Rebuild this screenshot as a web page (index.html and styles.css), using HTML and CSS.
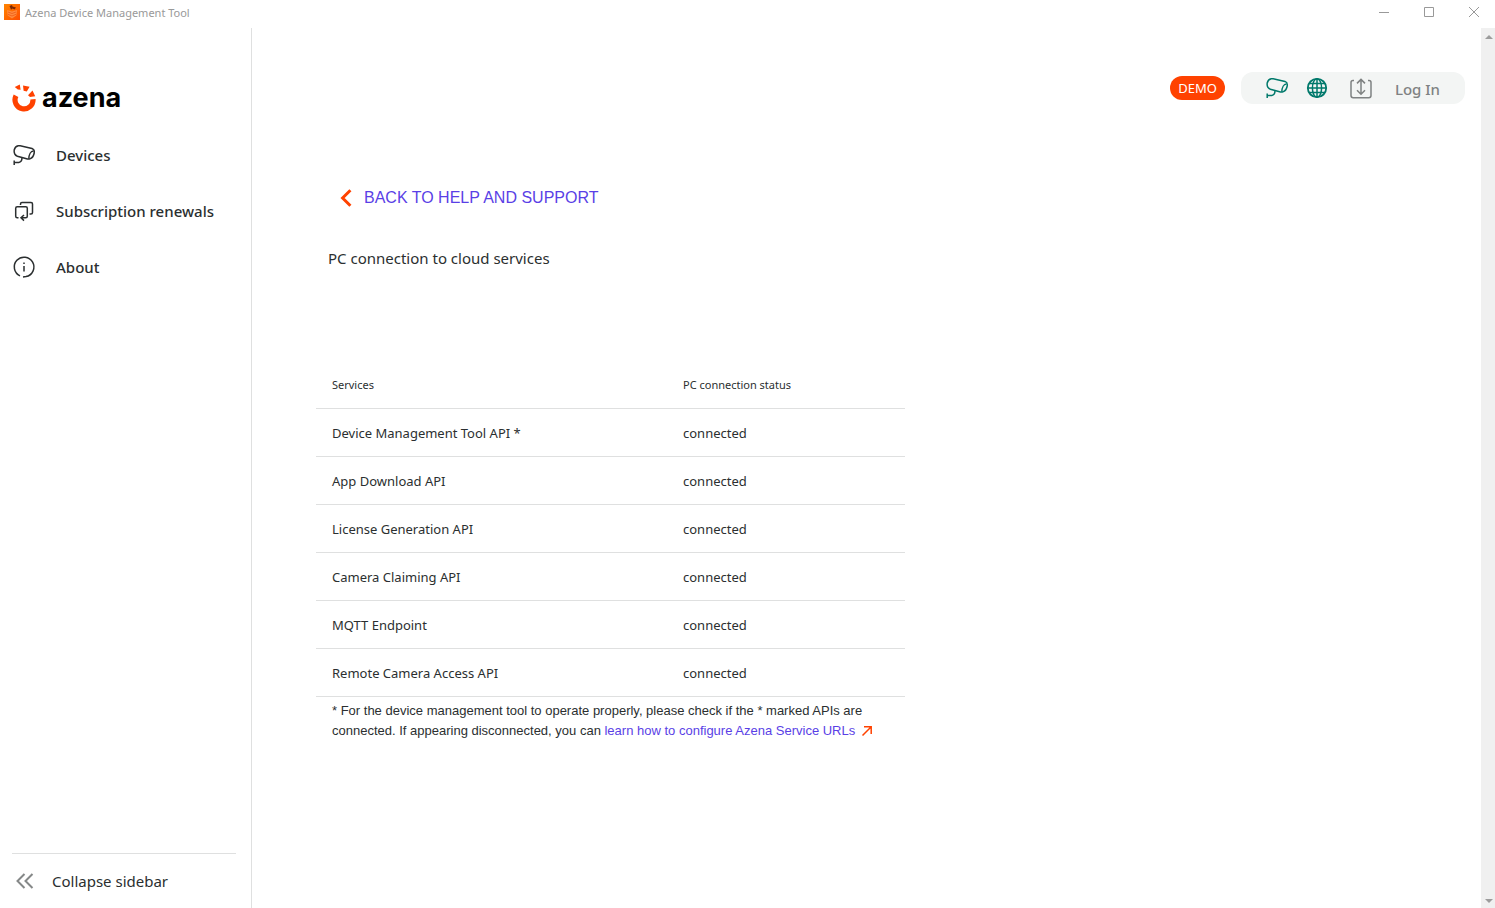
FILE: index.html
```html
<!DOCTYPE html>
<html lang="en">
<head>
  <meta charset="UTF-8" />
  <meta name="viewport" content="width=device-width, initial-scale=1" />
  <title>Azena Device Management Tool</title>
  <link rel="stylesheet" href="styles.css">
</head>
<body>
  <!-- Shared icons -->
  <svg class="sprite" aria-hidden="true">
    <symbol id="camera" viewBox="0 0 24 24">
      <path d="M6.2 2.8 H8.2 L20 5.4 Q22.8 6.6 22.2 10 Q21.4 14.4 18.4 15.6 Q16.6 16.4 14.6 15.8 L5.4 13.2 C2.4 12 1.9 9.2 2.2 7 Q3 3.4 6.2 2.8 Z" />
      <path d="M21.4 8 C18.8 8 17 11.6 16.8 15.8 M10 14.6 Q10 19.2 6.8 19.4 L2 19.4 M2.2 17.4 V22" />
    </symbol>
  </svg>

  <header class="titlebar">
    <svg class="app-icon" viewBox="0 0 16 16" aria-hidden="true">
      <defs>
        <linearGradient id="app-bg" x1="0" y1="0" x2="1" y2="1">
          <stop offset="0" stop-color="#ff8500" />
          <stop offset="1" stop-color="#ff4d00" />
        </linearGradient>
      </defs>
      <rect width="16" height="16" fill="url(#app-bg)" />
      <path d="M3 6 L8 7.5 L13 6 L12.3 11.5 L8 14.5 L3.7 11.5 Z" fill="#ff8a3d" />
      <path d="M4 8 L8 9.5 L12 8 M4 10.3 L8 12 L12 10.3" fill="none" stroke="#f0641e" />
      <path d="M5.5 2 L8 1 L8.5 2.6 L12 3.6 L10.5 5.5 L8.5 4.6 L7 5.8 L6.4 4 Z" fill="#7a2805" />
    </svg>
    <span class="titlebar-text">Azena Device Management Tool</span>
    <div class="window-controls">
      <button type="button" aria-label="Minimize">
        <svg viewBox="0 0 12 12"><path d="M1 6.5 H11" /></svg>
      </button>
      <button type="button" aria-label="Maximize">
        <svg viewBox="0 0 12 12"><path d="M1.5 1.5 H10.5 V10.5 H1.5 Z" /></svg>
      </button>
      <button type="button" aria-label="Close">
        <svg viewBox="0 0 12 12"><path d="M1 1 L11 11 M11 1 L1 11" /></svg>
      </button>
    </div>
  </header>

  <div class="shell">
    <aside class="sidebar">
      <a href="#" class="logo">
        <svg viewBox="0 0 24 28" aria-hidden="true">
          <path d="M4 11.8 A9 9 0 1 0 21 15.2" fill="none" stroke="#ff4200" stroke-width="5.2" />
          <path d="M2.8 3 L7.8 .6 L8.6 5.8 L5.8 5.6 Z M11 1.6 L17.6 2.8 L14.8 7.4 L11.6 6.8 Z M20.5 6.6 L23.2 12.2 L18 13 L16 11.2 Z" fill="#ff4200" />
        </svg>
        <span>azena</span>
      </a>

      <nav class="nav">
        <a href="#">
          <svg class="icon"><use href="#camera" /></svg>
          Devices
        </a>
        <a href="#">
          <svg class="icon" viewBox="0 0 24 24">
            <path d="M8.5 6 V5 Q8.5 3.5 10 3.5 H19 Q20.5 3.5 20.5 5 V13.5 Q20.5 15 19 15 H17.5" />
            <path d="M6.5 18.8 H5.2 Q3.7 18.8 3.7 17.3 V9.2 Q3.7 7.7 5.2 7.7 H13.8 Q15.3 7.7 15.3 9.2 V17.3 Q15.3 18.8 13.8 18.8 H9.6 M12 16 L9 18.8 L12 21.6" />
          </svg>
          Subscription renewals
        </a>
        <a href="#">
          <svg class="icon" viewBox="0 0 24 24">
            <path d="M8 20.9 A9.8 9.8 0 1 1 14 21.6 L11 21.9 M12 11 V16.6 M12 7.4 V9" />
          </svg>
          About
        </a>
      </nav>

      <button type="button" class="collapse">
        <svg viewBox="0 0 18 16" aria-hidden="true"><path d="M8.5 1 L1.5 8 L8.5 15 M16.5 1 L9.5 8 L16.5 15" /></svg>
        Collapse sidebar
      </button>
    </aside>

    <main class="main">
      <div class="toolbar">
        <span class="badge">DEMO</span>
        <div class="toolbar-pill">
          <button type="button" class="green" aria-label="Cameras">
            <svg class="icon"><use href="#camera" /></svg>
          </button>
          <button type="button" class="green globe" aria-label="Language">
            <svg class="icon" viewBox="0 0 24 24">
              <circle cx="12" cy="12" r="9.2" stroke-width="1.8" />
              <ellipse cx="12" cy="12" rx="4.6" ry="9.2" />
              <path d="M12 3 V21 M3 12 H21 M4.2 7.6 H19.8 M4.2 16.4 H19.8" />
            </svg>
          </button>
          <button type="button" class="upload" aria-label="Transfers">
            <svg class="icon" viewBox="0 0 24 24">
              <path d="M5 3.6 H4 Q2 3.6 2 5.6 V18.6 Q2 20.8 4.2 20.8 H19.8 Q22 20.8 22 18.6 V5.6 Q22 3.6 20 3.6 H19" />
              <path d="M12 2.6 V17 M8 6.4 L12 2.4 L16 6.4 M8 13.2 L12 17.2 L16 13.2" />
            </svg>
          </button>
          <button type="button" class="login">Log In</button>
        </div>
      </div>

      <a href="#" class="back">
        <svg viewBox="0 0 12 18" aria-hidden="true"><path d="M10.4 1.2 L2.6 9 L10.4 16.8" /></svg>
        BACK TO HELP AND SUPPORT
      </a>
      <h1>PC connection to cloud services</h1>

      <section class="services">
        <table>
          <thead>
            <tr><th scope="col">Services</th><th scope="col">PC connection status</th></tr>
          </thead>
          <tbody>
            <tr><td>Device Management Tool API *</td><td>connected</td></tr>
            <tr><td>App Download API</td><td>connected</td></tr>
            <tr><td>License Generation API</td><td>connected</td></tr>
            <tr><td>Camera Claiming API</td><td>connected</td></tr>
            <tr><td>MQTT Endpoint</td><td>connected</td></tr>
            <tr><td>Remote Camera Access API</td><td>connected</td></tr>
          </tbody>
        </table>
        <p class="note">
          <span>* For the device management tool to operate properly, please check if the * marked APIs are</span>
          <span>connected. If appearing disconnected, you can</span>
          <a href="#">learn how to configure Azena Service URLs
            <svg viewBox="0 0 12 12" aria-hidden="true"><path d="M1.5 10.5 L10 2 M3 1.8 H10.2 V9" /></svg></a>
        </p>
      </section>
    </main>

    <div class="scrollbar" aria-hidden="true">
      <svg viewBox="0 0 8 4"><path d="M4 0 L8 4 H0 Z" /></svg>
      <svg viewBox="0 0 8 4"><path d="M0 0 H8 L4 4 Z" /></svg>
    </div>
  </div>
</body>
</html>
```

FILE: styles.css
```css
:root {
  --orange: #ff4200;
  --green: #00796b;
  --link: #5a3fe6;
  --text: #2b2f30;
  --grey: #7f8282;
  --line: #dfe0e0;
  --ui: "Noto Sans", "Open Sans", sans-serif;
  --arial: "Liberation Sans", Arial, sans-serif;
}

* {
  box-sizing: border-box;
  margin: 0;
  padding: 0;
}

body {
  display: flex;
  flex-direction: column;
  min-height: 100vh;
  background: #fff;
  color: var(--text);
  font-family: var(--ui);
  font-size: 15px;
}

a {
  color: inherit;
  text-decoration: none;
}

button {
  border: none;
  background: none;
  color: inherit;
  font: inherit;
  cursor: pointer;
}

svg {
  display: block;
  flex-shrink: 0;
  fill: none;
  stroke: currentColor;
}

.sprite {
  position: absolute;
  width: 0;
  height: 0;
}

.icon {
  width: 24px;
  height: 24px;
  stroke-width: 1.5;
}

/* Window title bar */
.titlebar {
  display: flex;
  align-items: center;
  height: 28px;
  padding: 0 0 4px 4px;
  color: #999;
  font-size: 11px;
}
.app-icon {
  width: 16px;
  height: 16px;
  margin-right: 5px;
  stroke: none;
}
.window-controls {
  display: flex;
  margin-left: auto;
}
.window-controls button {
  display: flex;
  justify-content: center;
  width: 45px;
  padding-left: 3px;
}
.window-controls svg {
  width: 12px;
  height: 12px;
}

.shell {
  display: flex;
  flex: 1;
}

/* Sidebar */
.sidebar {
  display: flex;
  flex-direction: column;
  width: 252px;
  padding: 56px 15px 0 12px;
  border-right: 1px solid var(--line);
}
.logo {
  display: flex;
  align-items: center;
  gap: 6px;
  height: 28px;
  color: #000;
  font-family: Inter, sans-serif;
  font-size: 27px;
  font-weight: 700;
  line-height: 28px;
}
.logo svg {
  width: 24px;
  height: 28px;
  stroke: none;
}
.nav {
  display: flex;
  flex-direction: column;
  margin-top: 15px;
  font-weight: 500;
}
.nav a {
  display: flex;
  align-items: center;
  gap: 20px;
  height: 56px;
}
.collapse {
  display: flex;
  align-items: center;
  gap: 18px;
  height: 55px;
  margin-top: auto;
  padding-left: 4px;
  border-top: 1px solid var(--line);
}
.collapse svg {
  width: 18px;
  height: 16px;
  color: #858888;
  stroke-width: 2;
}

/* Content */
.main {
  flex: 1;
  padding: 44px 16px 32px 64px;
}
.toolbar {
  display: flex;
  align-items: center;
  justify-content: flex-end;
  gap: 16px;
}
.badge {
  padding: 0 8px;
  border-radius: 12px;
  background: var(--orange);
  color: #fff;
  font-size: 13px;
  line-height: 24px;
}
.toolbar-pill {
  display: flex;
  align-items: center;
  height: 32px;
  padding: 0 25px 0 24px;
  border-radius: 12px;
  background: #f3f5f4;
}
.green {
  color: var(--green);
}
.globe {
  margin-left: 16px;
}
.upload {
  margin: 2px 22px 0 20px;
}
.upload,
.login {
  color: var(--grey);
}
.login {
  padding-top: 2px;
  font-weight: 500;
}

.back {
  display: flex;
  align-items: center;
  gap: 12px;
  height: 24px;
  margin: 82px 0 0 24px;
  color: var(--link);
  font-family: var(--arial);
  font-size: 16px;
}
.back svg {
  width: 12px;
  height: 18px;
  color: var(--orange);
  stroke-width: 3;
}
h1 {
  margin: 36px 0 0 12px;
  font-size: 15px;
  font-weight: 400;
  line-height: 24px;
}

.services {
  max-width: 589px;
  margin-top: 90px;
}
table {
  width: 100%;
  border-collapse: collapse;
  table-layout: fixed;
}
th,
td {
  height: 48px;
  padding: 2px 16px 0;
  border-bottom: 1px solid var(--line);
  font-size: 13px;
  text-align: left;
}
th {
  font-size: 11px;
  font-weight: 400;
}
th:first-child {
  width: 351px;
}
.note {
  padding: 4px 16px 0;
  font-family: var(--arial);
  font-size: 13px;
  line-height: 20px;
}
.note a {
  color: var(--link);
}
.note svg {
  display: inline-block;
  width: 12px;
  height: 12px;
  margin-left: 2px;
  color: var(--orange);
  stroke-width: 1.5;
  vertical-align: -2px;
}

.scrollbar {
  display: flex;
  flex-direction: column;
  align-items: center;
  justify-content: space-between;
  width: 14px;
  padding: 7px 0 5px 2px;
  background: #f0f0f0;
}
.scrollbar svg {
  width: 8px;
  height: 4px;
  fill: #9c9c9c;
  stroke: none;
}
```
